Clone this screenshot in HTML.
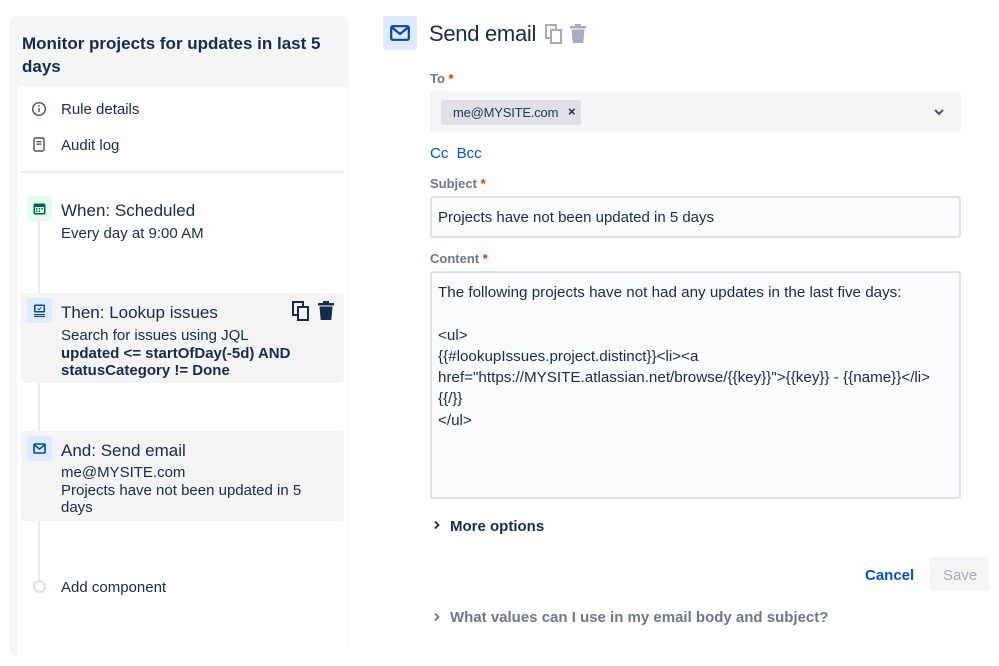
<!DOCTYPE html>
<html><head><style>
*{margin:0;padding:0;box-sizing:border-box}
body{width:999px;height:641px;background:#fff;font-family:"Liberation Sans",sans-serif;color:#172b4d;position:relative;overflow:hidden}
.a{position:absolute;white-space:nowrap}
.lbl{font-size:13px;font-weight:bold;color:#6b778c}
.lbl b{color:#de350b}
.t15{font-size:15px}
</style></head><body>
<div class="a" style="left:9px;top:16px;width:340px;height:640px;background:#f4f5f7;border-radius:8px"></div>
<div class="a" style="left:22px;top:32px;font-size:17px;font-weight:bold;line-height:23px;white-space:normal;width:310px">Monitor projects for updates in last 5 days</div>
<div class="a" style="left:17px;top:86px;width:331px;height:580px;background:#fff;border-radius:6px"></div>
<svg class="a" style="left:31px;top:101px" width="16" height="16" viewBox="0 0 16 16"><circle cx="8" cy="8" r="6.3" fill="none" stroke="#42526e" stroke-width="1.4"/><rect x="7.3" y="7" width="1.4" height="4" fill="#42526e"/><circle cx="8" cy="5" r=".9" fill="#42526e"/></svg>
<div class="a t15" style="left:61px;top:101px">Rule details</div>
<svg class="a" style="left:33px;top:137px" width="12" height="16" viewBox="0 0 12 16"><rect x="1" y="1" width="10" height="13" rx="1.5" fill="none" stroke="#42526e" stroke-width="1.4"/><rect x="3.5" y="4" width="5" height="1.3" fill="#42526e"/><rect x="3.5" y="6.5" width="5" height="1.3" fill="#42526e"/></svg>
<div class="a t15" style="left:61px;top:137px">Audit log</div>
<div class="a" style="left:21px;top:171px;width:323px;height:2px;background:#ebecf0"></div>
<div class="a" style="left:38px;top:215px;width:2px;height:370px;background:#ebecf0"></div>
<div class="a" style="left:21px;top:293px;width:323px;height:90px;background:#f4f4f4;border-radius:4px"></div>
<div class="a" style="left:21px;top:431px;width:323px;height:90px;background:#f4f4f4;border-radius:4px"></div>
<div class="a" style="left:27px;top:196px;width:25px;height:25px;background:#e3fcef;border-radius:3px"></div>
<svg class="a" style="left:33px;top:202px" width="13" height="13" viewBox="0 0 13 13"><rect x="0.5" y="1.5" width="12" height="11" rx="1.5" fill="#006644"/><rect x="2" y="5" width="9" height="6" fill="#e3fcef"/><g fill="#006644"><rect x="3" y="6" width="1.5" height="1.5"/><rect x="5.7" y="6" width="1.5" height="1.5"/><rect x="8.4" y="6" width="1.5" height="1.5"/><rect x="3" y="8.5" width="1.5" height="1.5"/><rect x="5.7" y="8.5" width="1.5" height="1.5"/></g></svg>
<div class="a" style="left:61px;top:201px;font-size:17px">When: Scheduled</div>
<div class="a t15" style="left:61px;top:225px">Every day at 9:00 AM</div>
<div class="a" style="left:27px;top:298px;width:25px;height:25px;background:#deebff;border-radius:3px"></div>
<svg class="a" style="left:33px;top:304px" width="13" height="13" viewBox="0 0 13 13"><rect x="1" y="0.5" width="11" height="8" rx="1" fill="#0747a6"/><rect x="2.5" y="2" width="8" height="5" fill="#deebff"/><path d="M4.5 4.5l1.5 1.3 2.5-2.5" stroke="#0747a6" fill="none" stroke-width="1"/><rect x="1" y="10" width="11" height="1.2" fill="#0747a6"/><rect x="1" y="12" width="11" height="1" fill="#0747a6"/></svg>
<div class="a" style="left:61px;top:303px;font-size:17px">Then: Lookup issues</div>
<svg class="a" style="left:292px;top:301px" width="18" height="20" viewBox="0 0 18 20"><rect x="1" y="1" width="10" height="13" fill="none" stroke="#172b4d" stroke-width="2"/><rect x="6" y="6" width="10" height="13" fill="#f4f4f4" stroke="#172b4d" stroke-width="2"/></svg>
<svg class="a" style="left:317px;top:301px" width="18" height="20" viewBox="0 0 18 20"><rect x="1" y="2" width="16" height="2.5" fill="#172b4d"/><rect x="6" y="0" width="6" height="3" fill="#172b4d"/><path d="M2.5 5.5h13l-1.2 13.5h-10.6z" fill="#172b4d"/></svg>
<div class="a t15" style="left:61px;top:327px">Search for issues using JQL</div>
<div class="a t15" style="left:61px;top:345px;font-weight:bold">updated &lt;= startOfDay(-5d) AND</div>
<div class="a t15" style="left:61px;top:362px;font-weight:bold">statusCategory != Done</div>
<div class="a" style="left:27px;top:436px;width:25px;height:25px;background:#deebff;border-radius:3px"></div>
<svg class="a" style="left:33px;top:443px" width="13" height="11" viewBox="0 0 13 11"><rect x="1" y="1" width="11" height="9" rx="1" fill="none" stroke="#0747a6" stroke-width="1.6"/><path d="M1.5 2l5 4 5-4" fill="none" stroke="#0747a6" stroke-width="1.5"/></svg>
<div class="a" style="left:61px;top:441px;font-size:17px">And: Send email</div>
<div class="a t15" style="left:61px;top:464px">me@MYSITE.com</div>
<div class="a t15" style="left:61px;top:482px">Projects have not been updated in 5</div>
<div class="a t15" style="left:61px;top:499px">days</div>
<div class="a" style="left:33px;top:580px;width:13px;height:13px;border:2px solid #dfe1e6;border-radius:50%;background:#fff"></div>
<div class="a t15" style="left:61px;top:579px">Add component</div>

<div class="a" style="left:383px;top:16px;width:34px;height:34px;background:#deebff;border-radius:3px"></div>
<svg class="a" style="left:390px;top:25px" width="20" height="16" viewBox="0 0 20 16"><rect x="1.2" y="1.2" width="17.6" height="13.6" rx="1.5" fill="none" stroke="#0747a6" stroke-width="2.2"/><path d="M2 2.5l8 6.5 8-6.5" fill="none" stroke="#0747a6" stroke-width="2.2"/></svg>
<div class="a" style="left:429px;top:21px;font-size:22px;letter-spacing:-0.3px">Send email</div>
<svg class="a" style="left:545px;top:24px" width="18" height="20" viewBox="0 0 18 20"><rect x="1" y="1" width="10" height="13" fill="none" stroke="#a5adba" stroke-width="2"/><rect x="6" y="6" width="10" height="13" fill="#fff" stroke="#a5adba" stroke-width="2"/></svg>
<svg class="a" style="left:569px;top:24px" width="18" height="20" viewBox="0 0 18 20"><rect x="1" y="2" width="16" height="2.5" fill="#a5adba"/><rect x="6" y="0" width="6" height="3" fill="#a5adba"/><path d="M2.5 5.5h13l-1.2 13.5h-10.6z" fill="#a5adba"/></svg>

<div class="a lbl" style="left:430px;top:71px">To <b>*</b></div>
<div class="a" style="left:430px;top:91px;width:531px;height:42px;background:#f4f5f7;border-radius:3px"></div>
<div class="a" style="left:441px;top:100px;width:140px;height:25px;background:#dfe1e6;border-radius:3px"></div>
<div class="a" style="left:453px;top:105px;font-size:13px;letter-spacing:-0.2px;color:#253858">me@MYSITE.com</div>
<div class="a" style="left:568px;top:104px;font-size:13px;font-weight:bold">×</div>
<svg class="a" style="left:933px;top:108px" width="12" height="8" viewBox="0 0 12 8"><path d="M2 2l4 4 4-4" fill="none" stroke="#42526e" stroke-width="2"/></svg>
<div class="a t15" style="left:430px;top:145px;color:#0052cc">Cc&nbsp; Bcc</div>
<div class="a lbl" style="left:430px;top:176px">Subject <b>*</b></div>
<div class="a" style="left:430px;top:196px;width:531px;height:42px;background:#fafbfc;border:2px solid #dfe1e6;border-radius:3px"></div>
<div class="a t15" style="left:438px;top:209px">Projects have not been updated in 5 days</div>
<div class="a lbl" style="left:430px;top:251px">Content <b>*</b></div>
<div class="a" style="left:430px;top:271px;width:531px;height:228px;background:#fafbfc;border:2px solid #dfe1e6;border-radius:3px"></div>
<div class="a" style="left:438px;top:282px;font-size:15.2px;line-height:21.3px;white-space:pre">The following projects have not had any updates in the last five days:

&lt;ul&gt;
{{#lookupIssues.project.distinct}}&lt;li&gt;&lt;a
href="https://MYSITE.atlassian.net/browse/{{key}}"&gt;{{key}} - {{name}}&lt;/li&gt;
{{/}}
&lt;/ul&gt;</div>
<svg class="a" style="left:433px;top:520px" width="8" height="10" viewBox="0 0 8 10"><path d="M2 1.5l3.5 3.5-3.5 3.5" fill="none" stroke="#172b4d" stroke-width="1.8"/></svg>
<div class="a t15" style="left:450px;top:518px;font-weight:bold;color:#172b4d">More options</div>
<div class="a t15" style="left:865px;top:567px;color:#0052cc;font-weight:bold">Cancel</div>
<div class="a" style="left:930px;top:557px;width:59px;height:34px;background:#f4f5f7;border-radius:3px"></div>
<div class="a t15" style="left:943px;top:567px;color:#a5adba">Save</div>
<svg class="a" style="left:433px;top:612px" width="8" height="10" viewBox="0 0 8 10"><path d="M2 1.5l3.5 3.5-3.5 3.5" fill="none" stroke="#6b778c" stroke-width="1.8"/></svg>
<div class="a t15" style="left:450px;top:609px;font-weight:bold;color:#6b778c">What values can I use in my email body and subject?</div>
</body></html>
